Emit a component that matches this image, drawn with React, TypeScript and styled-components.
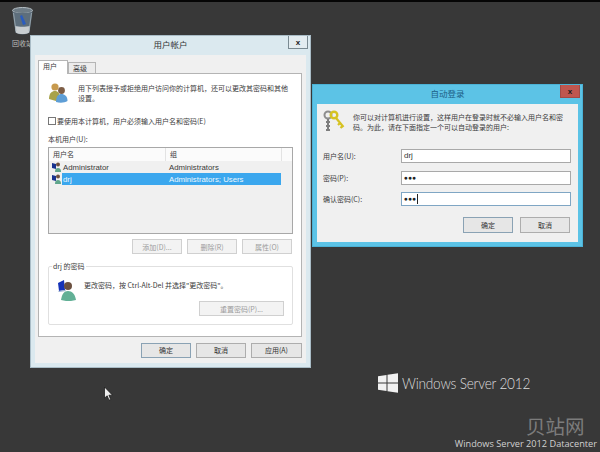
import React from "react";
import styled, { createGlobalStyle } from "styled-components";

const Global = createGlobalStyle`
  html, body { margin: 0; padding: 0; background: #383838; }
  #root { width: 600px; height: 452px; }
`;

const Desktop = styled.div`
  position: relative;
  width: 600px;
  height: 452px;
  overflow: hidden;
  background: #383838;
  border-top: 2px solid #050505;
  box-sizing: border-box;
  font-family: "Noto Sans CJK SC", "Liberation Sans", sans-serif;
  font-size: 7px;
  color: #3a3a3a;
`;

const BinIcon = styled.div`
  position: absolute;
  left: 11px;
  top: 5px;
  width: 23px;
  height: 29px;
`;

const BinLabel = styled.div`
  position: absolute;
  left: 12px;
  top: 36px;
  font-size: 7px;
  line-height: 11px;
  color: #bdbdbd;
`;

const Win = styled.div<{ $l: number; $t: number; $w: number; $h: number; $frame: string; $edge: string }>`
  position: absolute;
  left: ${p => p.$l}px;
  top: ${p => p.$t - 2}px;
  width: ${p => p.$w}px;
  height: ${p => p.$h}px;
  box-sizing: border-box;
  background: ${p => p.$frame};
  border: 1px solid ${p => p.$edge};
  display: flex;
  flex-direction: column;
  padding: 0 4px 4px;
`;

const TitleBar = styled.div<{ $color: string }>`
  position: relative;
  height: 19px;
  flex: none;
  box-sizing: border-box;
  padding-bottom: 3px;
  display: flex;
  align-items: center;
  justify-content: center;
  font-size: 8.5px;
  color: ${p => p.$color};
`;

const CloseBtn = styled.div<{ $bg: string; $bd: string }>`
  position: absolute;
  right: -2px;
  top: 0;
  width: 20px;
  height: 13px;
  box-sizing: border-box;
  background: ${p => p.$bg};
  border: 1px solid ${p => p.$bd};
  border-top: none;
  display: flex;
  align-items: center;
  justify-content: center;
  font: bold 8px "Liberation Sans", sans-serif;
  color: #1a1a1a;
`;

const MainBody = styled.div`
  flex: 1;
  background: #f0f0f0;
  padding: 6px 4px 0 3px;
  display: flex;
  flex-direction: column;
`;

const Tabs = styled.div`
  display: flex;
  height: 13px;
  align-items: flex-end;
  margin-bottom: -1px;
  position: relative;
  z-index: 1;
`;

const Tab = styled.div<{ $active?: boolean }>`
  width: ${p => (p.$active ? 30 : 28)}px;
  height: ${p => (p.$active ? 14 : 12)}px;
  box-sizing: border-box;
  border: 1px solid #b5b5b5;
  border-bottom: ${p => (p.$active ? "none" : "1px solid #b5b5b5")};
  background: ${p => (p.$active ? "#fff" : "#ececec")};
  line-height: 10px;
  padding-left: 4px;
`;

const Pane = styled.div`
  height: 264px;
  box-sizing: border-box;
  background: #fff;
  border: 1px solid #b4b4b4;
  padding: 8px 8px 0 9px;
  display: flex;
  flex-direction: column;
`;

const IntroRow = styled.div`
  display: flex;
  gap: 10px;
  height: 32px;
  padding-left: 1px;
`;

const IntroText = styled.div`
  line-height: 10px;
  width: 213px;
  padding-top: 1px;
`;

const CheckRow = styled.div`
  display: flex;
  align-items: center;
  gap: 1px;
  height: 13px;
`;

const CheckBox = styled.div`
  width: 6px;
  height: 6px;
  background: #fff;
  border: 1px solid #777;
`;

const SectionLabel = styled.div`
  margin-top: 6px;
  height: 12px;
  line-height: 12px;
`;

const ListBox = styled.div`
  margin-top: 2px;
  width: 245px;
  height: 87px;
  flex: none;
  box-sizing: border-box;
  border: 1px solid #a8a8a8;
  background: #f0f0f0;
  display: flex;
  flex-direction: column;
`;

const ListHead = styled.div`
  display: flex;
  height: 13px;
  flex: none;
  background: #fbfbfb;
  line-height: 13px;
`;

const HeadCell = styled.div<{ $w: number }>`
  width: ${p => p.$w}px;
  padding-left: 4px;
  box-sizing: border-box;
  border-right: 1px solid #e3e3e3;
`;

const ListRow = styled.div`
  display: flex;
  height: 12px;
  flex: none;
  align-items: center;
  padding: 0 1px 0 3px;
  font-family: "Liberation Sans", "Noto Sans CJK SC", sans-serif;
  font-size: 7.8px;
  gap: 1px;
`;

const RowCells = styled.div<{ $sel?: boolean }>`
  flex: 1;
  display: flex;
  align-items: center;
  height: 12px;
  margin-right: 10px;
  background: ${p => (p.$sel ? "#3ba7ee" : "transparent")};
  color: ${p => (p.$sel ? "#eef7fd" : "#3a3a3a")};
`;

const UserName = styled.div`
  width: 107px;
  padding-left: 1px;
  box-sizing: border-box;
`;

const ListButtons = styled.div`
  display: flex;
  justify-content: flex-end;
  gap: 5px;
  margin-top: 5px;
  width: 244px;
`;

const Btn = styled.div<{ $w: number; $h?: number; $off?: boolean; $focus?: boolean }>`
  width: ${p => p.$w}px;
  height: ${p => p.$h ?? 15}px;
  flex: none;
  box-sizing: border-box;
  border: 1px solid ${p => (p.$off ? "#d0d0d0" : p.$focus ? "#8aa2b4" : "#adadad")};
  background: ${p => (p.$off ? "#f3f3f3" : "#e6e6e6")};
  color: ${p => (p.$off ? "#9c9c9c" : "#333")};
  display: flex;
  align-items: center;
  justify-content: center;
`;

const GroupBox = styled.div`
  position: relative;
  margin-top: 12px;
  padding: 13px 8px 0 9px;
  width: 245px;
  height: 59px;
  flex: none;
  box-sizing: border-box;
  border: 1px solid #e0e0e0;
  border-radius: 2px;
`;

const Legend = styled.div`
  position: absolute;
  left: 3px;
  top: -6px;
  padding: 0 1px;
  background: #fff;
  line-height: 10px;
`;

const GroupRow = styled.div`
  display: flex;
  gap: 8px;
  height: 21px;
  line-height: 10px;
`;

const GroupButton = styled.div`
  display: flex;
  justify-content: flex-end;
`;

const Footer = styled.div`
  flex: 1;
  display: flex;
  justify-content: flex-end;
  align-items: center;
  gap: 5px;
`;

const LoginBody = styled.div`
  flex: 1;
  background: #f0f0f0;
  display: flex;
  flex-direction: column;
  padding: 5px 7px 0 6px;
`;

const LoginIntro = styled.div`
  display: flex;
  gap: 8px;
  height: 40px;
  line-height: 10px;
`;

const LoginText = styled.div`
  width: 213px;
  padding-top: 3px;
`;

const FieldRow = styled.div`
  display: flex;
  align-items: center;
  height: 14px;
  margin-bottom: 7.5px;
`;

const FieldLabel = styled.div`
  width: 78px;
  flex: none;
`;

const Field = styled.div<{ $focus?: boolean }>`
  width: 171px;
  height: 14px;
  box-sizing: border-box;
  background: #fff;
  border: 1px solid ${p => (p.$focus ? "#7fa6c4" : "#a9a9a9")};
  font: 8px/12px "Liberation Sans", sans-serif;
  padding-left: 2px;
  display: flex;
  align-items: center;
  color: #333;
`;

const Dots = styled.span`
  font-size: 6.5px;
  letter-spacing: 0.2px;
  color: #222;
`;

const Caret = styled.span`
  width: 1px;
  height: 10px;
  background: #222;
  margin-left: 1px;
`;

const LoginButtons = styled.div`
  display: flex;
  justify-content: flex-end;
  gap: 7px;
  margin-top: 3.5px;
  padding-right: 1px;
`;

const Brand = styled.div`
  position: absolute;
  left: 378px;
  top: 371px;
  display: flex;
  align-items: center;
  gap: 4px;
  color: #dcdcdc;
  font: 300 16px/20px "Lato", "Open Sans", sans-serif;
  letter-spacing: -0.25px;
  white-space: nowrap;
`;

const BrandText = styled.span`
  display: inline-block;
  transform: scaleX(0.853);
  transform-origin: left center;
`;

const Watermark = styled.div`
  position: absolute;
  left: 526px;
  top: 414px;
  font-size: 19.5px;
  line-height: 20px;
  color: #7c7c7c;
`;

const Edition = styled.div`
  position: absolute;
  right: 3px;
  top: 436px;
  font: 9.2px/11px "Open Sans", "Liberation Sans", sans-serif;
  color: #d0d0d0;
  white-space: nowrap;
`;

const Cursor = styled.svg`
  position: absolute;
  left: 103px;
  top: 384px;
`;

const Users = () => (
  <svg width="19" height="21" viewBox="0 0 19 21" style={{ flex: "none" }}>
    <circle cx="6" cy="5" r="3.6" fill="#c79a4e" />
    <path d="M0 17c0-6 3-8 6-8s5 2 5 8l-4 2z" fill="#a8a24a" />
    <circle cx="12.5" cy="8.5" r="3.4" fill="#7e5e46" />
    <path d="M7 20c0-6 2.5-8 5.5-8s6 2 6 7c-3 2-8 2-11.5 1z" fill="#5e9ed6" />
  </svg>
);

const SmallUser = () => (
  <svg width="9" height="10" viewBox="0 0 9 10" style={{ flex: "none" }}>
    <path d="M0 1l4 1v5L0 6z" fill="#17328f" />
    <circle cx="6" cy="2.5" r="2" fill="#6d5040" />
    <path d="M3 10c0-3 1-4 3-4s3 1 3 4z" fill="#5fa58c" />
  </svg>
);

const KeyUser = () => (
  <svg width="18" height="21" viewBox="0 0 18 21" style={{ flex: "none" }}>
    <path d="M0 3l6-3 1 10-6 1z" fill="#1633b8" />
    <path d="M0 11l7-1 1 1-7 1z" fill="#9ab0d0" />
    <circle cx="10" cy="6" r="4" fill="#6b5040" />
    <path d="M3 20c1-6 3-9 7-9s7 3 8 9c-5 1.5-10 1.5-15 0z" fill="#62b096" />
  </svg>
);

const Keys = () => (
  <svg width="22" height="24" viewBox="0 0 22 24" style={{ flex: "none" }}>
    <circle cx="5" cy="6" r="3.5" fill="none" stroke="#8d8d8d" strokeWidth="2" />
    <path d="M5 10v12M3 13h4M3 17h4M3 21h4" stroke="#7d7d7d" strokeWidth="2" />
    <circle cx="11" cy="6" r="3.3" fill="none" stroke="#d6c222" strokeWidth="2.4" />
    <path d="M13 9l7.5 9M17 14l-2 2M19.5 17l-2 2" stroke="#d6c222" strokeWidth="2.2" />
  </svg>
);

const Bin = () => (
  <svg width="23" height="29" viewBox="0 0 23 29">
    <ellipse cx="11.5" cy="3.5" rx="10" ry="3" fill="#6e7c86" stroke="#b8c2c8" />
    <path d="M1.5 4.5l3 21c3 2.5 11 2.5 14 0l3-21c-5 2-15 2-20 0z" fill="#5d6e7c" />
    <path d="M4 19c4 1 11 1 15 0l-.8 6.5c-3 2-10.4 2-13.4 0z" fill="#c8cdd0" />
    <path d="M9 9l3 9 3-1-4-9z" fill="#2a5cc0" />
    <path d="M2.5 6l2.5 18M20.5 6l-2.5 18" stroke="#a5b1b8" strokeWidth=".8" />
  </svg>
);

const Logo = () => (
  <svg width="20" height="20" viewBox="0 0 20 20">
    <path d="M0 3.2l8.5-1.300v7.500H0zM9.500 1.800L20 .2v9.200H9.500zM0 10.400h8.500v7.600L0 16.800zM9.500 10.400H20v9.400L9.500 18.200z" fill="#f1f1f1" />
  </svg>
);

export default function App() {
  return (
    <Desktop>
      <Global />
      <BinIcon><Bin /></BinIcon>
      <BinLabel>回收站</BinLabel>

      <Win $l={30} $t={35} $w={281} $h={333} $frame="#dbe9ef" $edge="#a9bcc6">
        <TitleBar $color="#333">
          用户帐户
          <CloseBtn $bg="#e3ecf0" $bd="#7a8a92">x</CloseBtn>
        </TitleBar>
        <MainBody>
          <Tabs>
            <Tab $active>用户</Tab>
            <Tab>高级</Tab>
          </Tabs>
          <Pane>
            <IntroRow>
              <Users />
              <IntroText>用下列表授予或拒绝用户访问你的计算机，还可以更改其密码和其他设置。</IntroText>
            </IntroRow>
            <CheckRow>
              <CheckBox />
              要使用本计算机，用户必须输入用户名和密码(E)
            </CheckRow>
            <SectionLabel>本机用户(U):</SectionLabel>
            <ListBox>
              <ListHead>
                <HeadCell $w={117}>用户名</HeadCell>
                <HeadCell $w={116}>组</HeadCell>
              </ListHead>
              <ListRow>
                <SmallUser />
                <RowCells>
                  <UserName>Administrator</UserName>
                  Administrators
                </RowCells>
              </ListRow>
              <ListRow>
                <SmallUser />
                <RowCells $sel>
                  <UserName>drj</UserName>
                  Administrators; Users
                </RowCells>
              </ListRow>
            </ListBox>
            <ListButtons>
              <Btn $w={50} $off>添加(D)...</Btn>
              <Btn $w={50} $off>删除(R)</Btn>
              <Btn $w={50} $off>属性(O)</Btn>
            </ListButtons>
            <GroupBox>
              <Legend>drj 的密码</Legend>
              <GroupRow>
                <KeyUser />
                <span>更改密码，按 Ctrl-Alt-Del 并选择"更改密码"。</span>
              </GroupRow>
              <GroupButton>
                <Btn $w={85} $off>重置密码(P)...</Btn>
              </GroupButton>
            </GroupBox>
          </Pane>
          <Footer>
            <Btn $w={50} $focus>确定</Btn>
            <Btn $w={50}>取消</Btn>
            <Btn $w={51}>应用(A)</Btn>
          </Footer>
        </MainBody>
      </Win>

      <Win $l={312} $t={84} $w={271} $h={163} $frame="#5cc3e6" $edge="#4bb2d6">
        <TitleBar $color="#1d5f86">
          自动登录
          <CloseBtn $bg="#c0564f" $bd="#a34a46">x</CloseBtn>
        </TitleBar>
        <LoginBody>
          <LoginIntro>
            <Keys />
            <LoginText>你可以对计算机进行设置，这样用户在登录时就不必输入用户名和密码。为此，请在下面指定一个可以自动登录的用户:</LoginText>
          </LoginIntro>
          <FieldRow>
            <FieldLabel>用户名(U):</FieldLabel>
            <Field>drj</Field>
          </FieldRow>
          <FieldRow>
            <FieldLabel>密码(P):</FieldLabel>
            <Field><Dots>●●●</Dots></Field>
          </FieldRow>
          <FieldRow>
            <FieldLabel>确认密码(C):</FieldLabel>
            <Field $focus><Dots>●●●</Dots><Caret /></Field>
          </FieldRow>
          <LoginButtons>
            <Btn $w={50} $h={16} $focus>确定</Btn>
            <Btn $w={50} $h={16}>取消</Btn>
          </LoginButtons>
        </LoginBody>
      </Win>

      <Brand><Logo /><BrandText>Windows Server 2012</BrandText></Brand>
      <Watermark>贝站网</Watermark>
      <Edition>Windows Server 2012 Datacenter</Edition>
      <Cursor width="10" height="16" viewBox="0 0 10 16">
        <path d="M1.5 1v11l2.700-2.200 1.800 4.400 1.700-.7-1.800-4.300H9.500z" fill="#eee" stroke="#111" strokeWidth=".7" />
      </Cursor>
    </Desktop>
  );
}
